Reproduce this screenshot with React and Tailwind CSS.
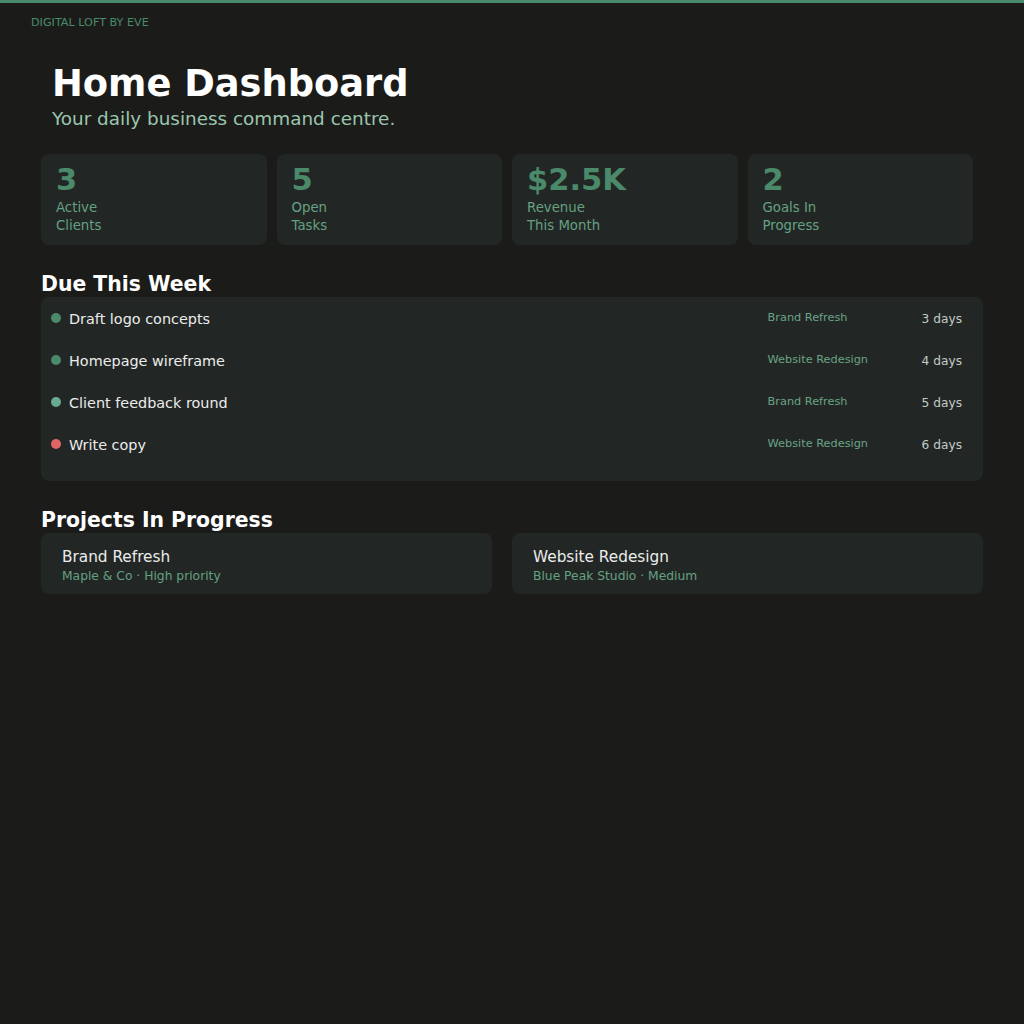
export default function App() {
  const stats = [
    { v: "3", l1: "Active", l2: "Clients" },
    { v: "5", l1: "Open", l2: "Tasks" },
    { v: "$2.5K", l1: "Revenue", l2: "This Month" },
    { v: "2", l1: "Goals In", l2: "Progress" },
  ];
  const tasks = [
    { t: "Draft logo concepts", p: "Brand Refresh", d: "3 days", c: "bg-[#4a8a6a]" },
    { t: "Homepage wireframe", p: "Website Redesign", d: "4 days", c: "bg-[#4a8a6a]" },
    { t: "Client feedback round", p: "Brand Refresh", d: "5 days", c: "bg-[#6aaa90]" },
    { t: "Write copy", p: "Website Redesign", d: "6 days", c: "bg-[#e06666]" },
  ];
  return (
    <div
      className="min-h-screen w-full bg-[#1b1c1a] border-t-[3px] border-[#4a8a6a] text-white"
      style={{ fontFamily: '"DejaVu Sans", Verdana, sans-serif' }}
    >
      <div className="pl-[31px] pt-[13px] text-[11.2px] leading-[14px] text-[#4a8a6a]">DIGITAL LOFT BY EVE</div>
      <div className="px-[41px]">
        <div className="pl-[11px] pt-[32px]">
          <h1 className="text-[36.8px] font-bold leading-[44px] text-white">Home Dashboard</h1>
          <p className="text-[18.4px] leading-[24px] text-[#9cc5ae] mt-[1px]">Your daily business command centre.</p>
        </div>
        <div className="grid grid-cols-4 gap-[10px] mr-[10px] mt-[23px]">
          {stats.map((s) => (
            <div key={s.v} className="bg-[#222725] rounded-[8px] h-[91px] px-[15px] pt-[8px]">
              <div className="text-[30.5px] font-bold leading-[36px] text-[#4a8a6a]">{s.v}</div>
              <div className="text-[13.3px] leading-[18px] text-[#65a083] mt-[1px]">
                <div>{s.l1}</div>
                <div>{s.l2}</div>
              </div>
            </div>
          ))}
        </div>
        <h2 className="text-[20.4px] font-bold leading-[26px] mt-[26px] text-white">Due This Week</h2>
        <div className="bg-[#222725] rounded-[8px] h-[184px] pt-[11px] pl-[10px] pr-[21px]">
          {tasks.map((t) => (
            <div key={t.t} className="flex items-center h-[42px]">
              <div className={`w-[10px] h-[10px] rounded-full ${t.c} -mt-[22px]`}></div>
              <div className="ml-[8px] flex-1 text-[14.4px] leading-[18px] text-[#ececec] -mt-[20px]">{t.t}</div>
              <div className="w-[154px] text-[11.3px] leading-[14px] text-[#6aa386] -mt-[22px]">{t.p}</div>
              <div className="text-[12.2px] leading-[16px] text-[#c3cbc6] -mt-[20px]">{t.d}</div>
            </div>
          ))}
        </div>
        <h2 className="text-[20.4px] font-bold leading-[26px] mt-[26px] text-white">Projects In Progress</h2>
        <div className="grid grid-cols-[451fr_471fr] gap-[20px]">
          <div className="bg-[#222725] rounded-[8px] h-[61px] px-[21px] pt-[15px]">
            <div className="text-[15.3px] leading-[19px] text-[#ececec]">Brand Refresh</div>
            <div className="text-[12.3px] leading-[16px] text-[#65a083] mt-[1px]">Maple &amp; Co · High priority</div>
          </div>
          <div className="bg-[#222725] rounded-[8px] h-[61px] px-[21px] pt-[15px]">
            <div className="text-[15.3px] leading-[19px] text-[#ececec]">Website Redesign</div>
            <div className="text-[12.3px] leading-[16px] text-[#65a083] mt-[1px]">Blue Peak Studio · Medium</div>
          </div>
        </div>
      </div>
    </div>
  );
}
